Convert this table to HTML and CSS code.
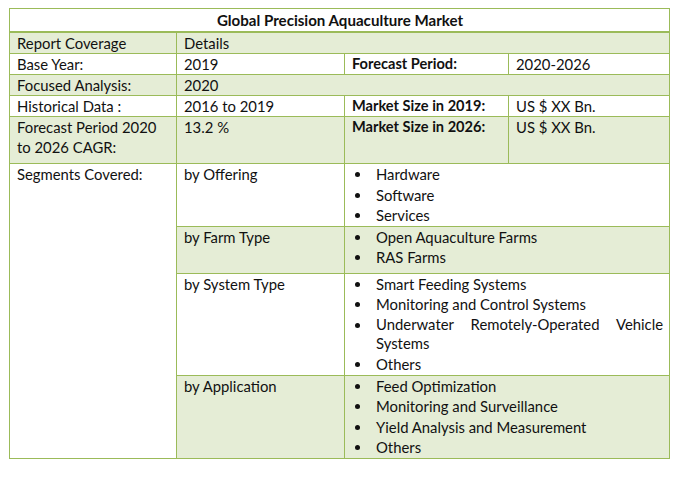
FILE: index.html
```html
<!DOCTYPE html>
<html>
<head>
<meta charset="utf-8">
<link rel="stylesheet" href="styles.css">
</head>
<body>
<div class="wrap">
<table class="report">
  <colgroup>
    <col class="c1"><col class="c2"><col class="c3"><col class="c4">
  </colgroup>
  <tr class="title"><th colspan="4">Global Precision Aquaculture Market</th></tr>
  <tr class="alt"><td>Report Coverage</td><td colspan="3">Details</td></tr>
  <tr><td>Base Year:</td><td>2019</td><td class="b">Forecast Period:</td><td>2020-2026</td></tr>
  <tr class="alt"><td>Focused Analysis:</td><td colspan="3">2020</td></tr>
  <tr><td>Historical Data :</td><td>2016 to 2019</td><td class="b">Market Size in 2019:</td><td>US $ XX Bn.</td></tr>
  <tr class="alt extra"><td>Forecast Period 2020 to 2026 CAGR:</td><td>13.2 %</td><td class="b">Market Size in 2026:</td><td>US $ XX Bn.</td></tr>
  <tr>
    <td rowspan="4" class="seg">Segments Covered:</td>
    <td>by Offering</td>
    <td colspan="2" class="list"><ul><li><span>Hardware</span></li><li><span>Software</span></li><li><span>Services</span></li></ul></td>
  </tr>
  <tr class="alt extra2">
    <td>by Farm Type</td>
    <td colspan="2" class="list"><ul><li><span>Open Aquaculture Farms</span></li><li><span>RAS Farms</span></li></ul></td>
  </tr>
  <tr>
    <td>by System Type</td>
    <td colspan="2" class="list"><ul><li><span>Smart Feeding Systems</span></li><li><span>Monitoring and Control Systems</span></li><li class="two"><span>Underwater Remotely-Operated Vehicle Systems</span></li><li><span>Others</span></li></ul></td>
  </tr>
  <tr class="alt">
    <td>by Application</td>
    <td colspan="2" class="list"><ul><li><span>Feed Optimization</span></li><li><span>Monitoring and Surveillance</span></li><li><span>Yield Analysis and Measurement</span></li><li><span>Others</span></li></ul></td>
  </tr>
</table>
</div>
</body>
</html>
```
FILE: styles.css
```css
html, body {
  margin: 0;
  padding: 0;
  background: #ffffff;
}
.wrap {
  padding: 8px 0 0 9px;
}
.report {
  border-collapse: collapse;
  table-layout: fixed;
  width: 660px;
  font-family: "Lato", "Open Sans", sans-serif;
  font-size: 14.85px;
  color: #111111;
  line-height: 20px;
}
.c1 { width: 167px; }
.c2 { width: 168px; }
.c3 { width: 164px; }
.c4 { width: 161px; }
.report th,
.report td {
  border: 1px solid #9bbb59;
  padding: 0 6px 0 7px;
  vertical-align: top;
  text-align: left;
  font-weight: normal;
}
.report .title th {
  text-align: center;
  font-weight: bold;
  font-size: 15.1px;
  height: 22px;
  line-height: 22px;
  border-bottom: 2px solid #9bbb59;
}
.report .alt td {
  background: #e5edd6;
}
.report td.seg {
  background: #ffffff;
}
.report td.b {
  font-weight: bold;
  font-size: 14.6px;
}
.report .extra td {
  padding-bottom: 6px;
}
.report .extra2 td {
  padding-bottom: 5px;
}
.report td.list {
  padding-left: 0;
  padding-right: 6px;
}
.list ul {
  list-style: none;
  margin: 0;
  padding: 0;
}
.list li {
  display: grid;
  grid-template-columns: 31px 1fr;
  line-height: 20.5px;
}
.list li.two {
  line-height: 19.75px;
}
.list li::before {
  content: "";
  width: 5px;
  height: 5px;
  border-radius: 50%;
  background: #111111;
  margin: 8px 0 0 10px;
}
.list li span {
  text-align: justify;
}
```
